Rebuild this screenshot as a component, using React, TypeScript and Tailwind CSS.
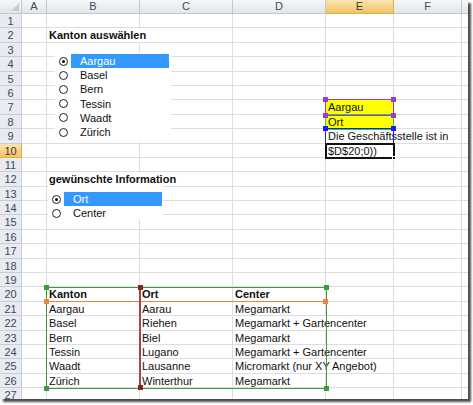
import React from 'react';

type Cell = { t: string; b?: boolean; bg?: string; open?: boolean };

const COLS = [
  { k: 'A', w: 'w-[25px]' },
  { k: 'B', w: 'w-[93px]' },
  { k: 'C', w: 'w-[93px]' },
  { k: 'D', w: 'w-[93px]' },
  { k: 'E', w: 'w-[68px]' },
  { k: 'F', w: 'w-[68px]' },
  { k: 'G', w: 'w-[12px]' },
];

const ROWS = Array.from({ length: 27 }, (_, i) => i + 1);

const CELLS: Record<string, Cell> = {
  B2: { t: 'Kanton auswählen', b: true, open: true },
  B12: { t: 'gewünschte Information', b: true, open: true },
  E7: { t: 'Aargau', bg: 'bg-[#ffff00]' },
  E8: { t: 'Ort', bg: 'bg-[#ffff00]' },
  E9: { t: 'Die Geschäftsstelle ist in', open: true },
  E10: { t: '$D$20;0))' },
  B20: { t: 'Kanton', b: true },
  C20: { t: 'Ort', b: true },
  D20: { t: 'Center', b: true },
  B21: { t: 'Aargau' },
  C21: { t: 'Aarau' },
  D21: { t: 'Megamarkt' },
  B22: { t: 'Basel' },
  C22: { t: 'Riehen' },
  D22: { t: 'Megamarkt + Gartencenter', open: true },
  B23: { t: 'Bern' },
  C23: { t: 'Biel' },
  D23: { t: 'Megamarkt' },
  B24: { t: 'Tessin' },
  C24: { t: 'Lugano' },
  D24: { t: 'Megamarkt + Gartencenter', open: true },
  B25: { t: 'Waadt' },
  C25: { t: 'Lausanne' },
  D25: { t: 'Micromarkt (nur XY Angebot)', open: true },
  B26: { t: 'Zürich' },
  C26: { t: 'Winterthur' },
  D26: { t: 'Megamarkt' },
};

const KANTONE = ['Aargau', 'Basel', 'Bern', 'Tessin', 'Waadt', 'Zürich'];

function Radio({ on }: { on?: boolean }) {
  return (
    <span className="w-[9px] h-[9px] rounded-full border-[1.5px] border-[#222] bg-white flex items-center justify-center shrink-0">
      {on && <span className="w-[3px] h-[3px] rounded-full bg-[#111]" />}
    </span>
  );
}

function Option({ label, on }: { label: string; on?: boolean }) {
  return (
    <div className="flex items-center h-[14.2px]">
      <span className="w-[16px] flex justify-center">
        <Radio on={on} />
      </span>
      <span
        className={
          on
            ? 'w-[98px] h-full bg-[#3399ff] text-white pl-[9px] leading-[14px]'
            : 'w-[98px] h-full text-[#111] pl-[9px] leading-[14px]'
        }
      >
        {label}
      </span>
    </div>
  );
}

export default function App() {
  return (
    <div className="w-[473px] h-[405px] bg-white font-['Liberation_Sans',Arial,sans-serif] text-[11px]">
      <div className="relative w-[468px] h-[399px] overflow-hidden bg-white shadow-[3px_3px_2px_rgba(0,0,0,0.7)]">
        {/* column headers */}
        <div className="flex h-[14px]">
          <div className="w-[22px] shrink-0 border-r border-b border-[#c3c8ce] bg-gradient-to-b from-[#f6f7f8] to-[#e2e5e9] flex items-end justify-end p-[2px]">
            <svg width="8" height="8" viewBox="0 0 8 8">
              <polygon points="8,0 8,8 0,8" fill="#c8ccd2" />
            </svg>
          </div>
          {COLS.map((c) => (
            <div
              key={c.k}
              className={
                c.k === 'E'
                  ? `${c.w} shrink-0 border-r border-b border-[#e0ad4a] bg-gradient-to-b from-[#fbe4b0] to-[#f4c25e] text-center leading-[13px] text-[#3a3a3a]`
                  : `${c.w} shrink-0 border-r border-b border-[#c3c8ce] bg-gradient-to-b from-[#f6f7f8] to-[#e2e5e9] text-center leading-[13px] text-[#3b4a5c]`
              }
            >
              {c.k === 'G' ? '' : c.k}
            </div>
          ))}
        </div>

        {/* rows */}
        {ROWS.map((r) => (
          <div key={r} className="flex h-[14.4px]">
            <div
              className={
                r === 10
                  ? 'w-[22px] shrink-0 border-r border-b border-[#e0ad4a] bg-gradient-to-b from-[#fbe4b0] to-[#f4c25e] text-center leading-[14px] text-[#3a3a3a]'
                  : 'w-[22px] shrink-0 border-r border-b border-[#c9ced4] bg-[#e8ebef] text-center leading-[14px] text-[#3b4a5c]'
              }
            >
              {r}
            </div>
            {COLS.map((c) => {
              const cell = CELLS[`${c.k}${r}`];
              return (
                <div
                  key={c.k}
                  className={`${c.w} shrink-0 relative border-b border-[#dcdee0] ${
                    cell?.open ? 'border-r border-r-transparent' : 'border-r border-r-[#dcdee0]'
                  } ${cell?.bg ?? ''}`}
                >
                  {cell && (
                    <span
                      className={`relative z-10 whitespace-nowrap pl-[2px] leading-[14px] block text-[#111] ${
                        cell.b ? 'font-bold' : ''
                      }`}
                    >
                      {cell.t}
                    </span>
                  )}
                </div>
              );
            })}
          </div>
        ))}

        {/* list box: Kanton */}
        <div className="absolute left-[55px] top-[53px] w-[116px] h-[89px] bg-white z-20 pl-[0px] pt-[1px]">
          {KANTONE.map((k, i) => (
            <Option key={k} label={k} on={i === 0} />
          ))}
        </div>

        {/* list box: Information */}
        <div className="absolute left-[48px] top-[186px] w-[115px] h-[33px] bg-white z-20 pt-[6px]">
          <Option label="Ort" on />
          <Option label="Center" />
        </div>

        {/* range references E7:E9 */}
        <div className="absolute left-[325px] top-[113.8px] w-[69px] h-[16.4px] border border-[#33cc33] z-20" />
        <div className="absolute left-[325px] top-[99.4px] w-[69px] h-[16.4px] border border-[#9a3ad6] z-20">
          <div className="absolute -left-[3px] -top-[3px] w-[5px] h-[5px] bg-[#9a3ad6]" />
          <div className="absolute -right-[3px] -top-[3px] w-[5px] h-[5px] bg-[#9a3ad6]" />
          <div className="absolute -left-[3px] -bottom-[3px] w-[5px] h-[5px] bg-[#9a3ad6]" />
          <div className="absolute -right-[3px] -bottom-[3px] w-[5px] h-[5px] bg-[#9a3ad6]" />
        </div>
        <div className="absolute left-[325px] top-[128.2px] w-[69px] h-[16.4px] border border-[#1a1aff] z-20">
          <div className="absolute -left-[3px] -top-[3px] w-[5px] h-[5px] bg-[#1a1aff]" />
          <div className="absolute -right-[3px] -top-[3px] w-[5px] h-[5px] bg-[#1a1aff]" />
        </div>

        {/* active cell E10 */}
        <div className="absolute left-[325px] top-[142.6px] w-[70px] h-[16.4px] border-2 border-[#111] z-20">
          <div className="absolute -right-[3px] -bottom-[3px] w-[4px] h-[4px] bg-[#111] border border-white" />
        </div>

        {/* table range B20:D26 */}
        <div className="absolute left-[46px] top-[286.6px] w-[281px] h-[102px] border border-[#3d9a3d] z-20">
          <div className="absolute -left-[3px] -top-[3px] w-[5px] h-[5px] bg-[#3d9a3d]" />
          <div className="absolute -right-[3px] -top-[3px] w-[5px] h-[5px] bg-[#3d9a3d]" />
          <div className="absolute -left-[3px] -bottom-[3px] w-[5px] h-[5px] bg-[#3d9a3d]" />
          <div className="absolute -right-[3px] -bottom-[3px] w-[5px] h-[5px] bg-[#3d9a3d]" />
        </div>
        <div className="absolute left-[47px] top-[300.5px] w-[279px] h-[1.5px] bg-[#f0843a] z-20">
          <div className="absolute -left-[3px] -top-[2px] w-[5px] h-[5px] bg-[#f0843a]" />
          <div className="absolute -right-[2px] -top-[2px] w-[5px] h-[5px] bg-[#f0843a]" />
        </div>
        <div className="absolute left-[139px] top-[287px] w-[2px] h-[101px] bg-[#a04646] z-20">
          <div className="absolute -left-[1.5px] -top-[2px] w-[5px] h-[5px] bg-[#8b2323]" />
          <div className="absolute -left-[1.5px] -bottom-[2px] w-[5px] h-[5px] bg-[#8b2323]" />
        </div>
      </div>
    </div>
  );
}
